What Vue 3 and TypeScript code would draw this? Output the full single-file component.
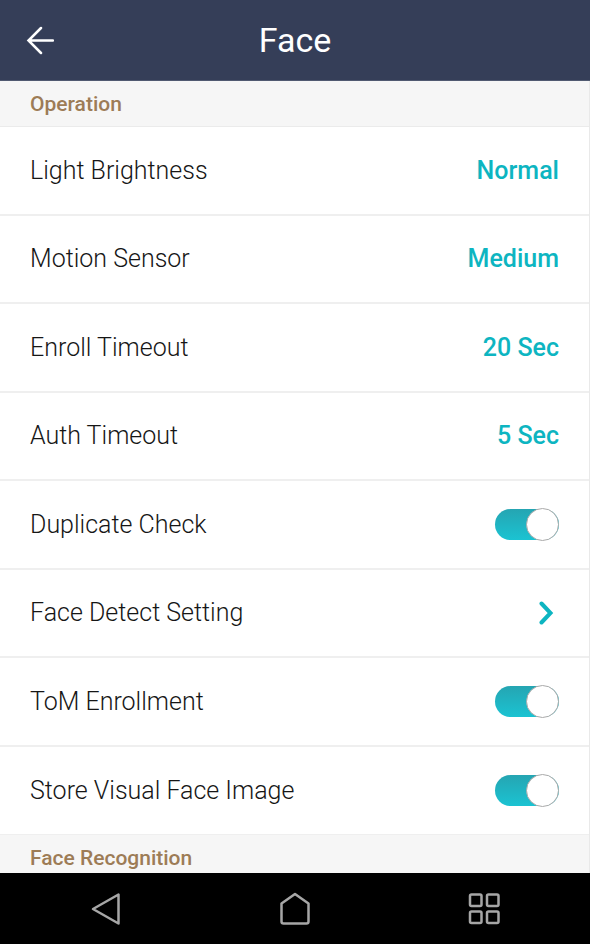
<script setup lang="ts">
import { ref } from 'vue'

interface ValueRow {
  kind: 'value'
  id: string
  label: string
  value: string
}
interface ToggleRow {
  kind: 'toggle'
  id: string
  label: string
  on: boolean
}
interface LinkRow {
  kind: 'link'
  id: string
  label: string
}
type Row = ValueRow | ToggleRow | LinkRow

const rows = ref<Row[]>([
  { kind: 'value', id: 'brightness', label: 'Light Brightness', value: 'Normal' },
  { kind: 'value', id: 'motion', label: 'Motion Sensor', value: 'Medium' },
  { kind: 'value', id: 'enroll', label: 'Enroll Timeout', value: '20 Sec' },
  { kind: 'value', id: 'auth', label: 'Auth Timeout', value: '5 Sec' },
  { kind: 'toggle', id: 'duplicate', label: 'Duplicate Check', on: true },
  { kind: 'link', id: 'detect', label: 'Face Detect Setting' },
  { kind: 'toggle', id: 'tom', label: 'ToM Enrollment', on: true },
  { kind: 'toggle', id: 'store', label: 'Store Visual Face Image', on: true },
])
</script>

<template>
  <div class="screen">
    <header class="bar">
      <button class="back" type="button" aria-label="Back">
        <svg width="28" height="30" viewBox="0 0 28 30" aria-hidden="true">
          <path d="M27 15.500H2.500M15 3L2.500 15.500L15 28" />
        </svg>
      </button>
      <h1 class="title">Face</h1>
    </header>

    <main class="content">
      <h2 class="section">Operation</h2>
      <ul class="list">
        <li v-for="row in rows" :key="row.id" class="item">
          <button v-if="row.kind === 'value'" class="row" type="button">
            <span class="label">{{ row.label }}</span>
            <span class="value">{{ row.value }}</span>
          </button>
          <label v-else-if="row.kind === 'toggle'" class="row" :for="row.id">
            <span class="label">{{ row.label }}</span>
            <input :id="row.id" v-model="row.on" class="toggle" type="checkbox" role="switch" />
          </label>
          <a v-else class="row" :href="`#${row.id}`">
            <span class="label">{{ row.label }}</span>
            <svg class="chevron" width="16" height="24" viewBox="0 0 16 24" aria-hidden="true">
              <path d="M2.500 2.500L11.500 12L2.500 21.500" />
            </svg>
          </a>
        </li>
      </ul>
      <h2 class="section">Face Recognition</h2>
    </main>

    <nav class="nav" aria-label="System">
      <button class="key" type="button" aria-label="Back">
        <svg width="32" height="34" viewBox="0 0 32 34" aria-hidden="true">
          <path d="M28.500 2.500V31.500L3 17Z" />
        </svg>
      </button>
      <button class="key" type="button" aria-label="Home">
        <svg width="32" height="34" viewBox="0 0 32 34" aria-hidden="true">
          <path d="M16 2L29.500 11.500V29.500Q29.500 31.500 27.500 31.500H4.500Q2.500 31.500 2.500 29.500V11.500Z" />
        </svg>
      </button>
      <button class="key" type="button" aria-label="Recent apps">
        <svg width="32" height="34" viewBox="0 0 32 34" aria-hidden="true">
          <rect x="2" y="2.500" width="11.500" height="11.500" rx="1.500" />
          <rect x="19" y="2.500" width="11.500" height="11.500" rx="1.500" />
          <rect x="2" y="19.500" width="11.500" height="11.500" rx="1.500" />
          <rect x="19" y="19.500" width="11.500" height="11.500" rx="1.500" />
        </svg>
      </button>
    </nav>
  </div>
</template>

<style>
body {
  margin: 0;
  background: #fff;
}
</style>

<style scoped>
.screen {
  display: flex;
  flex-direction: column;
  height: 100vh;
  font-family: Roboto, "Liberation Sans", sans-serif;
  background: #fff;
}

button {
  margin: 0;
  padding: 0;
  border: 0;
  background: none;
  font: inherit;
  color: inherit;
  cursor: pointer;
}

svg {
  display: block;
  fill: none;
}

.bar {
  display: grid;
  grid-template-columns: 28px 1fr 28px;
  align-items: center;
  flex: none;
  box-sizing: border-box;
  height: 81px;
  padding: 0 26px;
  color: #fff;
  background: #353e58;
  border-bottom: 1px solid #515a71;
}

.back svg {
  stroke: #fff;
  stroke-width: 2.5;
  stroke-linecap: round;
}

.title {
  margin: 0;
  font-size: 34px;
  line-height: 40px;
  font-weight: 400;
  text-align: center;
}

.content {
  flex: 1;
  min-height: 0;
  overflow-y: auto;
  scrollbar-width: none;
  border-right: 1px solid #e9e9e9;
}

.section {
  box-sizing: border-box;
  height: 46px;
  margin: 0;
  padding: 0 30px;
  border-bottom: 1px solid #ebebeb;
  font-size: 21px;
  line-height: 46px;
  font-weight: 500;
  color: #9d7c56;
  background: #f6f6f6;
}

.list {
  margin: 0;
  padding: 0;
  list-style: none;
}

.item {
  box-sizing: border-box;
  height: 88px;
  border-bottom: 2px solid #efefef;
}

.item:nth-child(odd) {
  height: 89px;
}

.item:last-child {
  border-bottom-width: 1px;
}

.row {
  display: flex;
  align-items: center;
  justify-content: space-between;
  box-sizing: border-box;
  width: 100%;
  height: 100%;
  padding: 0 30px;
  font-size: 25px;
  line-height: 32px;
  color: #161616;
  text-align: left;
  text-decoration: none;
  cursor: pointer;
}

.label {
  font-weight: 300;
}

.value {
  font-weight: 500;
  color: #0db5c1;
}

.toggle {
  appearance: none;
  display: flex;
  align-items: center;
  width: 64px;
  height: 31px;
  margin: 0;
  border-radius: 16px;
  background: #c4c4c4;
  cursor: pointer;
}

.toggle::before {
  content: "";
  flex: none;
  box-sizing: border-box;
  width: 33px;
  height: 33px;
  border: 1px solid #aaa;
  border-radius: 50%;
  background: #fff;
}

.toggle:checked {
  justify-content: flex-end;
  background: linear-gradient(#25a5b2, #1bc3d2);
}

.chevron {
  margin-right: 4px;
  stroke: #0db5c1;
  stroke-width: 4;
  stroke-linecap: round;
}

.nav {
  display: grid;
  grid-template-columns: repeat(3, 32px);
  justify-content: space-between;
  align-items: center;
  flex: none;
  box-sizing: border-box;
  height: 71px;
  padding: 0 90px;
  background: #000;
}

.key svg {
  stroke: #a6a6a6;
  stroke-width: 2.5;
  stroke-linejoin: round;
}
</style>
